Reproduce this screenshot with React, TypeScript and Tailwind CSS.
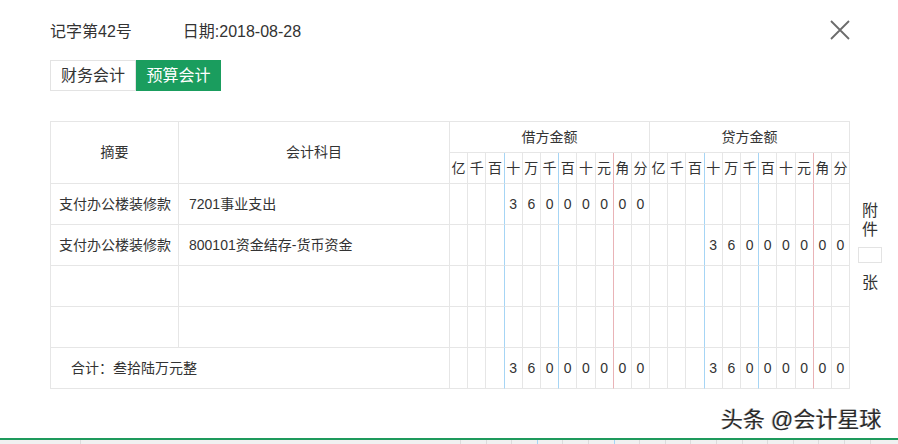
import React from "react";

const UNITS = ["亿", "千", "百", "十", "万", "千", "百", "十", "元", "角", "分"];
const AMOUNT = ["", "", "", "3", "6", "0", "0", "0", "0", "0", "0"];
const EMPTY = ["", "", "", "", "", "", "", "", "", "", ""];

function sepClass(i: number) {
  if (i === 2 || i === 5) return "border-r border-[#a6d5f5]";
  if (i === 8) return "border-r border-[#e9b3b7]";
  return "border-r border-[#e6e6e6]";
}

function Half({ values, header }: { values: string[]; header?: boolean }) {
  return (
    <div className="flex w-[200px]">
      {values.map((v, i) => (
        <div
          key={i}
          className={`flex-1 min-w-0 flex items-center justify-center border-b border-b-[#e6e6e6] ${sepClass(i)} ${
            header ? "text-[14px]" : "text-[14px]"
          } text-[#333]`}
        >
          {v}
        </div>
      ))}
    </div>
  );
}

function Row({
  summary,
  subject,
  debit,
  credit,
}: {
  summary: string;
  subject: string;
  debit: string[];
  credit: string[];
}) {
  return (
    <div className="flex h-[41px]">
      <div className="w-[128px] flex items-center pl-[8px] border-r border-b border-[#e6e6e6] text-[14px] text-[#333] whitespace-nowrap">
        {summary}
      </div>
      <div className="w-[271px] flex items-center pl-[10px] border-r border-b border-[#e6e6e6] text-[14px] text-[#333] whitespace-nowrap">
        {subject}
      </div>
      <Half values={debit} />
      <Half values={credit} />
    </div>
  );
}

export default function App() {
  return (
    <div
      className="relative w-[898px] h-[444px] bg-white overflow-hidden flex flex-col"
      style={{ fontFamily: '"Liberation Sans", "Noto Sans CJK SC", sans-serif' }}
    >
      {/* top bar */}
      <div className="flex items-start justify-between pl-[50px] pr-[48px] pt-[21px]">
        <div className="flex items-center text-[16px] leading-[22px] text-[#333]">
          <span>记字第42号</span>
          <span className="ml-[51px]">日期:2018-08-28</span>
        </div>
        <svg width="20" height="20" viewBox="0 0 20 20" className="mt-[-1px]">
          <path d="M1 1 L19 19 M19 1 L1 19" stroke="#6b6b6b" strokeWidth="1.8" fill="none" />
        </svg>
      </div>

      {/* tabs */}
      <div className="flex pl-[50px] mt-[17px]">
        <div className="h-[31px] w-[86px] flex items-center justify-center border border-[#e3e3e3] text-[16px] text-[#333]">
          财务会计
        </div>
        <div className="h-[31px] w-[85px] flex items-center justify-center bg-[#1a9d5e] text-[16px] text-white">
          预算会计
        </div>
      </div>

      {/* table + attachments */}
      <div className="flex pl-[50px] mt-[30px]">
        <div className="w-[800px] border-l border-t border-[#e6e6e6]">
          {/* header */}
          <div className="flex h-[62px]">
            <div className="w-[128px] flex items-center justify-center border-r border-b border-[#e6e6e6] text-[14px] text-[#333]">
              摘要
            </div>
            <div className="w-[271px] flex items-center justify-center border-r border-b border-[#e6e6e6] text-[14px] text-[#333]">
              会计科目
            </div>
            <div className="flex flex-col w-[400px]">
              <div className="flex h-[31px]">
                <div className="w-[200px] flex items-center justify-center border-r border-b border-[#e6e6e6] text-[14px] text-[#333]">
                  借方金额
                </div>
                <div className="w-[200px] flex items-center justify-center border-r border-b border-[#e6e6e6] text-[14px] text-[#333]">
                  贷方金额
                </div>
              </div>
              <div className="flex h-[31px]">
                <Half values={UNITS} header />
                <Half values={UNITS} header />
              </div>
            </div>
          </div>

          <Row summary="支付办公楼装修款" subject="7201事业支出" debit={AMOUNT} credit={EMPTY} />
          <Row summary="支付办公楼装修款" subject="800101资金结存-货币资金" debit={EMPTY} credit={AMOUNT} />
          <Row summary="" subject="" debit={EMPTY} credit={EMPTY} />
          <Row summary="" subject="" debit={EMPTY} credit={EMPTY} />

          {/* total */}
          <div className="flex h-[41px]">
            <div className="w-[399px] flex items-center pl-[20px] border-r border-b border-[#e6e6e6] text-[14px] text-[#333]">
              合计：叁拾陆万元整
            </div>
            <Half values={AMOUNT} />
            <Half values={AMOUNT} />
          </div>
        </div>

        <div className="w-[40px] flex flex-col items-center pt-[80px] text-[16px] leading-[19px] text-[#333]">
          <span>附</span>
          <span>件</span>
          <div className="mt-[8px] w-[24px] h-[16px] border border-[#e3e3e3]" />
          <span className="mt-[10px]">张</span>
        </div>
      </div>

      {/* bottom strip */}
      <div className="mt-auto h-[6px] border-t-2 border-[#1e9a5c] bg-[#f1f1f1] flex">
        <div className="w-[81px] border-r border-[#dcdcdc]" />
        <div className="w-[380px] border-r border-[#dcdcdc]" />
        {Array.from({ length: 16 }).map((_, i) => (
          <div
            key={i}
            className={`w-[25.6px] border-r ${i === 2 || i === 5 ? "border-[#a6d5f5]" : "border-[#dcdcdc]"}`}
          />
        ))}
      </div>

      {/* watermark */}
      <div className="absolute left-[721px] top-[406px] text-[22px] leading-[28px] text-[#2a2a2a] whitespace-nowrap [text-shadow:1px_1px_0_#ffffff,-1px_0_0_#bbbbbb]">
        头条 @会计星球
      </div>
    </div>
  );
}
